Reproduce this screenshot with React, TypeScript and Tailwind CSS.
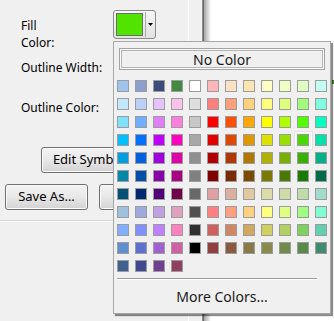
import React from 'react';

const swatchRows: string[][] = [
  ['#9dc3ee', '#8d9fcf', '#3d4b7c', '#428a42', '#ffffff', '#ffb6b6', '#ffe2c6', '#ffe6b0', '#ffffc4', '#f0ffc4', '#ddffc4', '#c2fff0'],
  ['#c4e6ff', '#bcd0ff', '#e8c2ff', '#ffc2e8', '#dedede', '#ff7e7e', '#ffa07a', '#ffd27e', '#ffff7e', '#e0ff7e', '#a2ff7e', '#7effe0'],
  ['#7ee2ff', '#70aeff', '#e07ef8', '#ff7ede', '#c8c8c8', '#ff0000', '#ff5000', '#ffa800', '#ffff00', '#b0ff00', '#50ff00', '#00ffc0'],
  ['#00c0ff', '#0070ff', '#c000ff', '#ff00c0', '#a8a8a8', '#e00000', '#e04800', '#e09800', '#e0e000', '#98e000', '#48d800', '#00e0a8'],
  ['#00a0e0', '#0060e0', '#a000e0', '#e000a8', '#909090', '#b00000', '#b03800', '#b07800', '#b0b000', '#78b000', '#38b000', '#00b088'],
  ['#0088a8', '#0050a8', '#8800a8', '#a80080', '#808080', '#800000', '#7a2a00', '#7a4a00', '#7a7a00', '#4a7a00', '#1a7a00', '#006a4a'],
  ['#005078', '#002870', '#500078', '#700048', '#686868', '#e0a0a0', '#dcb0a0', '#e0c8a0', '#dcdcaa', '#d0dca8', '#c0dca8', '#a0dccc'],
  ['#a0c0e0', '#a0a8e0', '#c0a0e0', '#e0a0c0', '#505050', '#ff8080', '#ffa080', '#ffd080', '#ffff80', '#e0ff80', '#a0ff80', '#80ffd0'],
  ['#80b0ff', '#8090ff', '#c080ff', '#ff80c0', '#303030', '#d06060', '#d08860', '#d0a860', '#d0d060', '#b0d060', '#80d060', '#60d0b0'],
  ['#6090d0', '#6070d0', '#a060d0', '#d060a0', '#000000', '#904040', '#8a5a40', '#8a7a4a', '#8a8a4a', '#708a4a', '#5a8a4a', '#408a70'],
  ['#406090', '#404890', '#704090', '#904060'],
];

const SELECTED = { row: 3, col: 10 };

function WinButton({ label, className }: { label: string; className: string }) {
  return (
    <button
      className={`h-[26px] rounded-[3px] border border-[#707070] bg-linear-to-b from-[#f3f3f3] via-[#e8e8e8] to-[#d3d3d3] shadow-[inset_0_0_0_1px_#fbfbfb] text-[13px] text-black whitespace-nowrap overflow-hidden ${className}`}
    >
      {label}
    </button>
  );
}

function ColorPopup() {
  return (
    <div className="absolute left-[113px] top-[41px] w-[218px] h-[273px] border border-[#a7a7a7] bg-[#f0f0f0] shadow-[2px_2px_1px_rgba(0,0,0,0.45)] flex flex-col">
      <div className="mt-[6px] ml-[5px] w-[206px] h-[22px] border border-[#a3a3a3] bg-[#fafafa] p-px">
        <div className="h-full border border-[#b4b4b4] bg-[#f0f0f0] flex items-center justify-center text-[14px] text-[#1a1a1a]">
          No Color
        </div>
      </div>

      <div className="mt-[7px] flex flex-col">
        {swatchRows.map((row, r) => (
          <div key={r} className="flex h-[18px]">
            {row.map((c, i) => {
              const sel = r === SELECTED.row && i === SELECTED.col;
              return (
                <div key={i} className="w-[18px] h-[18px] flex items-center justify-center">
                  {sel ? (
                    <div className="w-[17px] h-[17px] border border-white shadow-[0_0_0_1px_#e4e4e4] flex items-center justify-center">
                      <div className="w-[12px] h-[12px] border border-[#9c9c9c]" style={{ backgroundColor: c }} />
                    </div>
                  ) : (
                    <div className="w-[12px] h-[12px] border border-[#9c9c9c]" style={{ backgroundColor: c }} />
                  )}
                </div>
              );
            })}
          </div>
        ))}
      </div>

      <div className="mt-[3px] ml-[3px] mr-[13px] border-t border-[#a0a0a0] border-b border-b-white" />

      <div className="flex-1 flex items-center justify-center text-[14px] text-[#1a1a1a]">More Colors...</div>
    </div>
  );
}

export default function App() {
  return (
    <div className="relative w-[334px] h-[321px] overflow-hidden flex bg-[#f0f0f0] font-['Noto_Sans',sans-serif]">
      {/* left properties panel */}
      <div className="w-[189px] border-r border-white flex flex-col pt-[10px]">
        <div className="flex items-start pl-[21px]">
          <div className="w-[92px] mt-[7px] text-[12px] leading-[17px] text-black">
            Fill
            <br />
            Color:
          </div>
          <button className="w-[43px] h-[29px] rounded-[3px] border border-[#8a8a8a] bg-linear-to-b from-[#f6f6f6] to-[#e2e2e2] flex items-center pl-[2px]">
            <div className="w-[27px] h-[23px] border border-[#6c6c6c] bg-[#50e400]" />
            <div className="ml-[2px] w-px h-[25px] bg-[#a8a8a8]" />
            <div className="flex-1 flex items-center justify-center">
              <svg width="5" height="3" viewBox="0 0 5 3">
                <path d="M0 0h5L2.5 3z" fill="#000" />
              </svg>
            </div>
          </button>
        </div>

        <div className="mt-[8px] pl-[21px] text-[12px] leading-[17px] text-black">Outline Width:</div>
        <div className="mt-[23px] pl-[21px] text-[12px] leading-[17px] text-black">Outline Color:</div>

        <div className="mt-[31px] flex pl-[41px]">
          <WinButton label="Edit Symbol..." className="w-[106px]" />
        </div>

        <div className="mt-[11px] flex gap-[11px] pl-[5px]">
          <WinButton label="Save As..." className="w-[83px] h-[25px]" />
          <WinButton label="Load..." className="w-[83px] h-[25px]" />
        </div>

        <div className="mt-[10px] border-t border-[#dadada] border-b border-b-white" />
      </div>

      {/* splitter */}
      <div className="w-[13px] bg-[#f0f0f0]" />
      <div className="w-px bg-[#8a8a8a]" />
      <div className="w-px bg-[#6a6a6a]" />
      <div className="w-[7px] bg-linear-to-r from-[#a6a6a6] to-white" />

      {/* canvas area */}
      <div className="flex-1 bg-white flex flex-col">
        <div className="ml-auto mt-[80px] w-[2px] h-[4px] bg-[#3a9a20]" />
      </div>

      <ColorPopup />
    </div>
  );
}
